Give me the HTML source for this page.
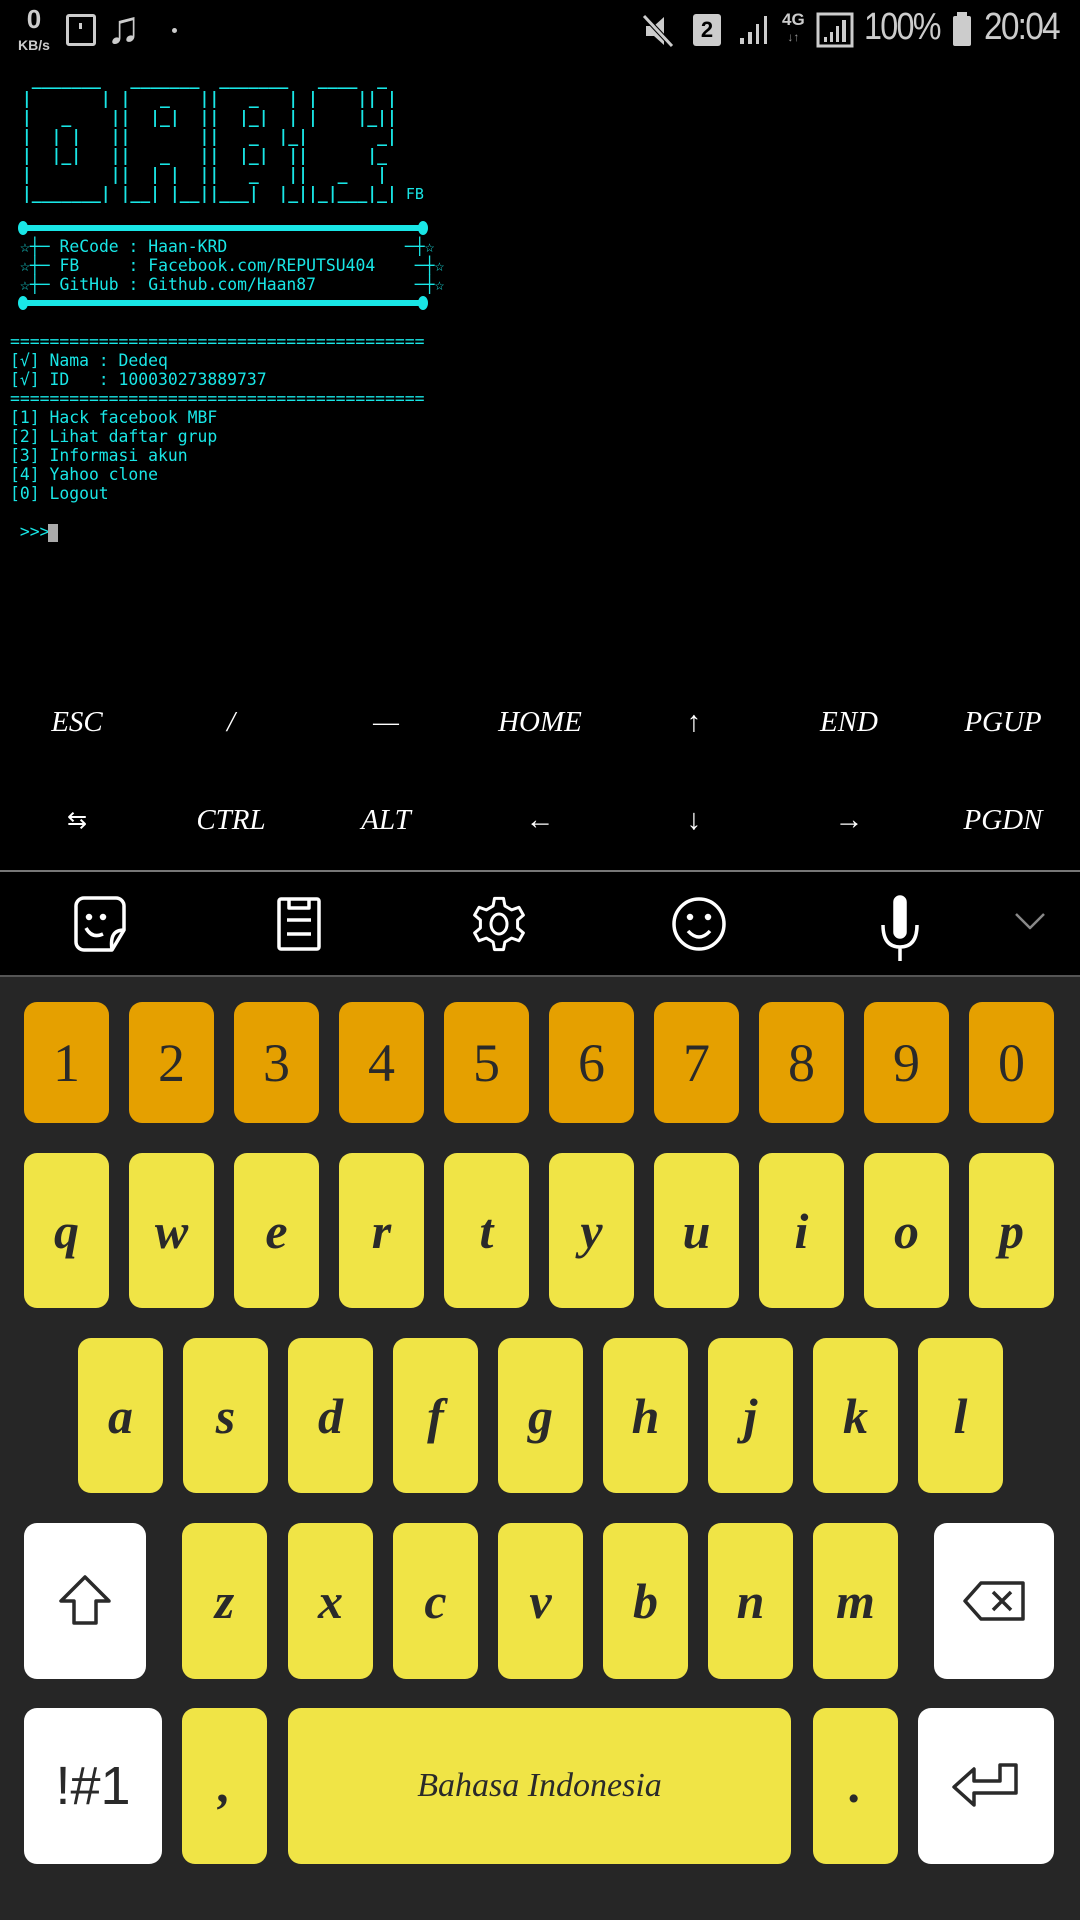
<!DOCTYPE html>
<html><head><meta charset="utf-8"><style>
*{margin:0;padding:0;box-sizing:border-box}
body{width:1080px;height:1920px;background:#000;position:relative;overflow:hidden;font-family:"Liberation Sans",sans-serif}
.mono{position:absolute;font-family:"DejaVu Sans Mono","Liberation Mono",monospace;font-size:16.4px;line-height:19px;color:#19e6e6;white-space:pre;left:10px}
.bar{position:absolute;left:20px;width:406px;height:6px;background:#19e6e6}
.bar:before,.bar:after{content:"";position:absolute;top:-4px;width:10px;height:14px;border-radius:50%;background:#19e6e6}
.bar:before{left:-2px}.bar:after{right:-2px}
.ek{position:absolute;color:#fff;font-family:"Liberation Serif",serif;font-style:italic;font-size:29px;transform:translateX(-50%);white-space:nowrap}
.kb{position:absolute;left:0;top:977px;width:1080px;height:943px;background:#262626}
.k{position:absolute;border-radius:13px;background:#f0e446;color:#2a2a2a;font-family:"Liberation Serif",serif;font-style:italic;font-weight:bold;font-size:50px;display:flex;align-items:center;justify-content:center}
.n{background:#e5a000;font-weight:normal;font-style:normal;font-size:54px}
.w{background:#fff}
.sb{position:absolute;color:#ccc;top:8px}
</style></head><body>
<!-- status bar -->
<div class="sb" style="left:14px;top:8px;font-size:26px;font-weight:bold;width:40px;text-align:center;line-height:22px">0<br><span style="font-size:14px">KB/s</span></div>
<div style="position:absolute;left:66px;top:14px;width:30px;height:32px;border:3px solid #ccc;border-radius:3px"><div style="position:absolute;left:10px;top:6px;width:3px;height:6px;background:#ccc"></div></div>
<div class="sb" style="left:106px;top:0px;font-size:46px">♫</div>
<div style="position:absolute;left:172px;top:28px;width:5px;height:5px;border-radius:50%;background:#ccc"></div>
<svg style="position:absolute;left:640px;top:12px" width="40" height="38"><path d="M6 14h8l10-9v28l-10-9H6z" fill="#ccc"/><path d="M4 4l28 30" stroke="#000" stroke-width="5"/><path d="M4 4l28 30" stroke="#ccc" stroke-width="3"/></svg>
<div style="position:absolute;left:693px;top:14px;width:28px;height:32px;background:#ccc;border-radius:3px;color:#000;font-weight:bold;font-size:22px;text-align:center;line-height:32px">2</div>
<svg style="position:absolute;left:738px;top:14px" width="36" height="32"><path d="M2 30h4v-6H2zM10 30h4V18h-4zM18 30h3V10h-3zM26 30h3V2h-3z" fill="#ccc"/></svg>
<div class="sb" style="left:782px;top:12px;font-size:17px;font-weight:bold;line-height:16px;text-align:center">4G<br><span style="font-size:12px;color:#999">↓↑</span></div>
<svg style="position:absolute;left:816px;top:12px" width="38" height="36"><rect x="2" y="2" width="34" height="32" fill="none" stroke="#ccc" stroke-width="3"/><path d="M8 30h3v-5H8zM14 30h3V20h-3zM20 30h3V14h-3zM26 30h4V8h-4z" fill="#ccc"/></svg>
<div class="sb" style="left:864px;top:6px;font-size:38px;letter-spacing:-2px;transform:scaleX(.85);transform-origin:left">100%</div>
<div style="position:absolute;left:953px;top:16px;width:18px;height:30px;background:#ccc;border-radius:2px"></div>
<div style="position:absolute;left:957px;top:12px;width:10px;height:5px;background:#ccc"></div>
<div class="sb" style="left:984px;top:6px;font-size:38px;letter-spacing:-2px;transform:scaleX(.88);transform-origin:left">20:04</div>

<!-- terminal -->
<div class="mono" style="top:70px;left:12px;font-weight:bold">  _______   _______  _______   ____  _
 |       | |   _   ||   _   | |    || |
 |   _    ||  |_|  ||  |_|  | |    |_||
 |  | |   ||       ||   _  |_|       _|
 |  |_|   ||   _   ||  |_|  ||      |_
 |        ||  | |  ||   _   ||   _   |
 |_______| |__| |__||___|  |_||_|___|_|<span style="font-size:15px;font-weight:normal"> FB</span></div>
<div class="bar" style="top:225px"></div>
<div class="mono" style="top:237px;left:20px">☆┼─ ReCode : Haan-KRD                  ─┼☆
☆┼─ FB     : Facebook.com/REPUTSU404    ─┼☆
☆┼─ GitHub : Github.com/Haan87          ─┼☆</div>
<div class="bar" style="top:300px"></div>
<div class="mono" style="top:332px">==========================================
[√] Nama : Dedeq
[√] ID   : 100030273889737
==========================================
[1] Hack facebook MBF
[2] Lihat daftar grup
[3] Informasi akun
[4] Yahoo clone
[0] Logout

 >>></div>
<div style="position:absolute;left:48px;top:524px;width:10px;height:18px;background:#aaa"></div>

<!-- extra keys -->
<div class="ek" style="left:77px;top:706px">ESC</div>
<div class="ek" style="left:231px;top:706px">/</div>
<div class="ek" style="left:386px;top:706px">—</div>
<div class="ek" style="left:540px;top:706px">HOME</div>
<div class="ek" style="left:694px;top:706px;font-style:normal">↑</div>
<div class="ek" style="left:849px;top:706px">END</div>
<div class="ek" style="left:1003px;top:706px">PGUP</div>
<div class="ek" style="left:77px;top:806px;font-style:normal;font-size:24px">⇆</div>
<div class="ek" style="left:231px;top:804px">CTRL</div>
<div class="ek" style="left:386px;top:804px">ALT</div>
<div class="ek" style="left:540px;top:804px;font-style:normal">←</div>
<div class="ek" style="left:694px;top:804px;font-style:normal">↓</div>
<div class="ek" style="left:849px;top:804px;font-style:normal">→</div>
<div class="ek" style="left:1003px;top:804px">PGDN</div>
<div style="position:absolute;left:0;top:870px;width:1080px;height:2px;background:#777"></div>

<!-- toolbar -->
<svg style="position:absolute;left:0;top:880px" width="1080" height="96" fill="none" stroke="#fff" stroke-width="3.5" stroke-linejoin="round">
<path d="M76 62V26a8 8 0 0 1 8-8h32a8 8 0 0 1 8 8v24l-12 20H84a8 8 0 0 1-8-8z"/><path d="M124 50c-10 0-14 6-12 20"/><circle cx="89" cy="37" r="1.5" fill="#fff"/><circle cx="103" cy="37" r="1.5" fill="#fff"/><path d="M86 48q6 11 17 6"/>
<rect x="279" y="19" width="40" height="50" rx="2"/><path d="M289 19v9h20v-9M287 40h24M287 54h24"/>
<path d="M493.1 25.9L494.5 18.4L503.5 18.4L504.9 25.9L511.7 29.9L518.9 27.3L523.4 35.1L517.6 40L517.6 48L523.4 52.9L518.9 60.7L511.7 58.1L504.9 62.1L503.5 69.6L494.5 69.6L493.1 62.1L486.3 58.1L479.1 60.7L474.6 52.9L480.4 48L480.4 40L474.6 35.1L479.1 27.3L486.3 29.9Z" stroke-width="3"/><ellipse cx="499" cy="44" rx="8" ry="10" stroke-width="3"/>
<circle cx="699" cy="44" r="25"/><circle cx="690" cy="37" r="1.5" fill="#fff"/><circle cx="708" cy="37" r="1.5" fill="#fff"/><path d="M688 51q11 12 22 0"/>
<rect x="895" y="17" width="10" height="40" rx="5" fill="#fff"/><path d="M883 45q0 22 17 22t17-22M900 67v14"/>
<path d="M1016 34l14 14 14-14" stroke="#888" stroke-width="2.5"/>
</svg>
<div style="position:absolute;left:0;top:975px;width:1080px;height:2px;background:#555"></div>

<!-- keyboard -->
<div class="kb"></div>
<div class="k n" style="left:24px;top:1002px;width:85px;height:121px">1</div>
<div class="k n" style="left:129px;top:1002px;width:85px;height:121px">2</div>
<div class="k n" style="left:234px;top:1002px;width:85px;height:121px">3</div>
<div class="k n" style="left:339px;top:1002px;width:85px;height:121px">4</div>
<div class="k n" style="left:444px;top:1002px;width:85px;height:121px">5</div>
<div class="k n" style="left:549px;top:1002px;width:85px;height:121px">6</div>
<div class="k n" style="left:654px;top:1002px;width:85px;height:121px">7</div>
<div class="k n" style="left:759px;top:1002px;width:85px;height:121px">8</div>
<div class="k n" style="left:864px;top:1002px;width:85px;height:121px">9</div>
<div class="k n" style="left:969px;top:1002px;width:85px;height:121px">0</div>

<div class="k" style="left:24px;top:1153px;width:85px;height:155px">q</div>
<div class="k" style="left:129px;top:1153px;width:85px;height:155px">w</div>
<div class="k" style="left:234px;top:1153px;width:85px;height:155px">e</div>
<div class="k" style="left:339px;top:1153px;width:85px;height:155px">r</div>
<div class="k" style="left:444px;top:1153px;width:85px;height:155px">t</div>
<div class="k" style="left:549px;top:1153px;width:85px;height:155px">y</div>
<div class="k" style="left:654px;top:1153px;width:85px;height:155px">u</div>
<div class="k" style="left:759px;top:1153px;width:85px;height:155px">i</div>
<div class="k" style="left:864px;top:1153px;width:85px;height:155px">o</div>
<div class="k" style="left:969px;top:1153px;width:85px;height:155px">p</div>

<div class="k" style="left:78px;top:1338px;width:85px;height:155px">a</div>
<div class="k" style="left:183px;top:1338px;width:85px;height:155px">s</div>
<div class="k" style="left:288px;top:1338px;width:85px;height:155px">d</div>
<div class="k" style="left:393px;top:1338px;width:85px;height:155px">f</div>
<div class="k" style="left:498px;top:1338px;width:85px;height:155px">g</div>
<div class="k" style="left:603px;top:1338px;width:85px;height:155px">h</div>
<div class="k" style="left:708px;top:1338px;width:85px;height:155px">j</div>
<div class="k" style="left:813px;top:1338px;width:85px;height:155px">k</div>
<div class="k" style="left:918px;top:1338px;width:85px;height:155px">l</div>

<div class="k w" style="left:24px;top:1523px;width:122px;height:156px"><svg width="56" height="56" fill="none" stroke="#2a2a2a" stroke-width="3.5" stroke-linejoin="round"><path d="M28 4L4 28h13v22h22V28h13z"/></svg></div>
<div class="k" style="left:182px;top:1523px;width:85px;height:156px">z</div>
<div class="k" style="left:288px;top:1523px;width:85px;height:156px">x</div>
<div class="k" style="left:393px;top:1523px;width:85px;height:156px">c</div>
<div class="k" style="left:498px;top:1523px;width:85px;height:156px">v</div>
<div class="k" style="left:603px;top:1523px;width:85px;height:156px">b</div>
<div class="k" style="left:708px;top:1523px;width:85px;height:156px">n</div>
<div class="k" style="left:813px;top:1523px;width:85px;height:156px">m</div>
<div class="k w" style="left:934px;top:1523px;width:120px;height:156px"><svg width="66" height="44" fill="none" stroke="#2a2a2a" stroke-width="3.5" stroke-linejoin="round"><path d="M20 4h42v36H20L4 22z"/><path d="M32 13l18 18M50 13L32 31"/></svg></div>

<div class="k w" style="left:24px;top:1708px;width:138px;height:156px;font-style:normal;font-weight:normal;font-family:'Liberation Sans',sans-serif;font-size:54px">!#1</div>
<div class="k" style="left:182px;top:1708px;width:85px;height:156px;align-items:flex-end;padding-bottom:50px">,</div>
<div class="k" style="left:288px;top:1708px;width:503px;height:156px;font-size:34px;font-weight:normal">Bahasa Indonesia</div>
<div class="k" style="left:813px;top:1708px;width:85px;height:156px;align-items:flex-end;padding-bottom:50px">.</div>
<div class="k w" style="left:918px;top:1708px;width:136px;height:156px"><svg width="72" height="50" fill="none" stroke="#2a2a2a" stroke-width="3.5" stroke-linejoin="round"><path d="M50 4h16v28H24v12L4 26 24 8v12h26z"/></svg></div>
</body></html>
